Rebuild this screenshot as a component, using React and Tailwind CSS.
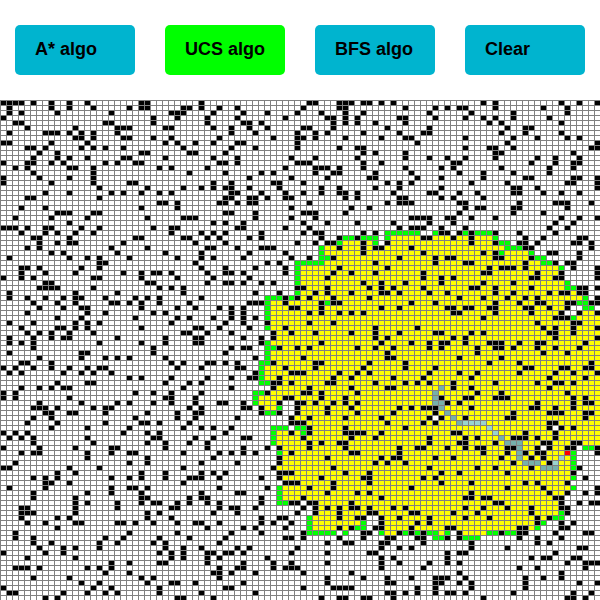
import { useState } from "react";

const COLS = 100;
const ROWS = 100;
const CELL_W = 6;
const CELL_H = 5;

// One line per grid row: wall columns of the left half | wall columns of the right half (counted from column 50).
const WALLS = `0 1 2 3 5 8 11 14 23 24 33|1 2 6 7 8 10 11 13 15 30 32 43 46 49
1 8 11 15 21 23 24 30 31 33 36 39|0 6 7 17 22 24 26 27 32 40 44
1 3 9 18 28 29 30 35 40 44 49|3 7 10 21 28 35 44
0 25 29 34 39 47|4 5 7 9 16 17 22 27 30 32 35 41
2 3 17 18 25 34 40 41 43|5 7 9 12 17 31 33 43
4 12 19 20 21 27 28 35 38 41 44|0 1 5 14 21 34 37 38
1 7 8 9 11 13 15 19 38 42 49|2 4 10 16 20 21 33 37 43
12 13 15 20 21 25 28 36 45 49|0 2 7 13 17 18 27 35 39 44 46
0 1 8 14 27 29 32 35 39 40 49|19 34 49
4 5 7 13 15 17 20 30 38 42 49|6 9 10 27 31 32 35 48 49
6 9 23 24 31 32 37|10 12 17 32 33 45
5 9 11 14 20 21 27 35 39 48|2 9 17 21 24 27 32 39 42 46
0 4 5 8 10 17 19 22 23 36 37 39 49|0 1 10 13 25 26 38 42 45 46
2 4 11 12 15 26 28 34 47|2 3 4 6 10 17 23 25 33 41 45
5 15 31 37 43 45|2 5 6 12 18 26 30 35 41
0 6 11 15 41 48|4 11 12 19 23 30 37 38 45 46 49
0 8 15 21 22 35 38 45 46|0 14 16 18 28 34 44 45 49
16 24 30 33 35 37 38 41 46|3 6 12 16 23 35 36 39 49
7 11 18 20 23 26 28 38 39 43 47|0 3 6 7 9 15 21 22 26 29 35 36 40 43 46
4 5 16 37 38 41 42 44 47 48|7 9 16 17 23 25 30
26 27 29 36 37 39 41 42|1 14 16 17 18 26 27 36 42 43 44 48
3 7 23 29 48|8 11 27 29 30 35 36 44
9 10 11 15 16 37 38 42|0 1 2 7 26 35 40
2 8 14 24 30 31 32 42 48|2 18 19 20 21 24 25 28 32 43 46 49
11 35 37 40|0 4 9 15 21 25 42 45
0 1 2 4 7 8 13 16 25 28 29 39 40 47|1 16 18 19 20 23 27 41 44
3 7 9 12 15 28 33 35 37 43|0 2 3 10 12 23 24 26 28 32 36 42
5 6 11 22 23 30 31 34 36 41 43|3 6 9 20 21 25 28 37 40 46 47
6 9 11 12 20 32 37 49|2 4 5 10 14 28 32 36 37 39 45 46 48
4 6 18 24 34 35 39 43 44 45|6 10 12 13 18 37 38 48
8 10 19 27 33 41 47|10 20 30 32 41 42 46
1 11 14 16 21 29 33 35 40 48|1 5 16 22 24 25 32 33 38 46
16 17 32 44 46|12 22 27 28 37 42 44 45
3 4 6 13 16 33 37 42 47|6 14 31 33 34 35 37 45 49
3 7 12 20 23 25 26 28 34 37 38 40 47|5 8 12 20 30 31 39 43 49
0 3 5 15 16 23 29 35 41|4 20 23 25 38 39 42 43 49
7 8 24 25 34 37 38 40 43 45|10 13 17 23 30 35
6 7 8 9 15 26 28 30 49|0 4 11 13 15 20 28 29 32 38 46 47 49
1 12 19 30 42 46|2 4 8 13 14 16 21 24 32 35 41 43 44 46 47
1 4 7 10 12 13 17 22 24 26 33 47 49|1 5 11 26 30 34 37 39 49
5 9 12 18 19 21 23 26 31 41 42 43 47|3 5 6 18 22 32 36 39 40 44 45 48 49
6 10 13 14 23 29 32 36 38 40 48 49|3 13 16 24 25 27 28 31 32 37 38 41 44
4 14 17 25 27 38 40|1 3 6 8 10 25 26 32 38 43 46 49
9 13 22 29 31 35 38 40 42|30 42 43 44
1 5 12 14 16 28 37 40 44|1 5 39 45 46
3 9 10 12 14 23 32 33 36 41 47|12 19 40 42 45 49
4 6 8 11 15 30 31 34 38 45 48|2 8 12 16 22 23 28 30 41 42 45
1 5 8 10 11 19 27 32 33 40 43 45|12 14 25 27 42 49
1 3 5 16 23 27 32 33 43|3 13 18 21 23 24 27 31 32 33 36 39 40 47
5 25 38 40 41 46 49|1 9 12 15 21 23 29 32 33 35 39 42 46
1 13 14 25 37|14 29 40 44
6 13 17 19 21 27 42|0 14 15 26 33
3 4 8 28 30 34 35 37 39 45|2 3 11 17 31 36 48
0 2 5 8 11 14 16 17 29 33 39 40 47|2 10 17 22 37 38 43 44 47 48
1 3 10 13 15 18 42 48 49|0 6 9 11 21 26 29 36 42 45 49
21 23 28 34 38 41 42 46|5 8 15 20 28 41 47
9 14 15 27 31 33 45 46 48|4 5 12 17 19 21 25 32 39 42 43 45
3 6 8 10 11 30 38 45|1 8 14 15 25 28 41
0 2 22 25 28 33 44|0 1 3 9 29 33 44
0 2 11 27 28 32 47 48|3 7 23 27 28 32 33 34 45 47
6 13 19 21 25 28 32 36 37 40 46 49|0 2 5 7 9 24 26 39 45 47 48
5 6 7 9 15 17 18 31 33 40 41 43 49|4 8 16 18 20 21 22 28 38 39 42 45
7 8 11 12 17 24 29 32 33 43 46 49|4 9 15 22 35 41 42 43 47 48
5 8 22 29 32 39 48|1 7 13 21 23 27 34 35 47
4 9 17 23 24 26 31 48 49|0 14 20 22 41 42
8 14 21 30 33 35 38|1 7 17 41 43 45
0 2 4 20 24 26 37 48|1 7 8 9 10 13 25 26 37 42
1 3 5 14 25 26 32 35 40 41|0 8 12 21 27 29 35 36 37 39 42
5 15 24 27 31 34|1 3 6 7 21 26 27 32 40 41 45 46
0 6 12 18 19 27 34 40 44 46|1 7 16 19 20 24 27 29 30 34 35 39 41 44 45 49
3 5 6 14 18 21 22 30 36 38 40 42 48|8 9 16 30 34 37 39 40 49
14 24 35 46|4 13 15 16 22 25 33 38 40
2 21 24 33 39 46|12 14 17 35 41
0 1 11 16 30 45|5 21 29 32 38 46
9 12 23 27 33 35 37 46 47 48|7 11 23 26 34 45
5 7 9 18 21 23 27 31 32 33 36 43 46|3 10 11 20 22 47
7 8 11 30 47 48 49|5 11 23 28 37 39 44
1 7 18 21 22 24 36 44|1 5 18 34 40 49
5 14 18 23 33 39 40|4 9 11 28 41 44 47 49
5 12 23 24 31 33 34 43|0 13 27 28 30 31 42 43
12 14 19 23 25 26 29 31 34 36 43 48 49|1 2 8 32 33 43 46 48 49
3 4 12 19 28 29 36 38 39 42|0 2 4 6 8 9 11 15 17 27 30 34 38 43 44
3 4 5 12 24 26 35 39 49|2 6 11 12 18 19 25 29 38 44
3 9 11 24 28 43 46 47|6 9 10 13 16 21 27 31 39 41
4 7 12 13 19 20 22 25 29 32 33 36 43 45 48|13 19 21 39 43 45
9 34 40 42 47|6 8 12 13 18 24 25 36 37 43 44
2 21 29 38 43|0 10 11 16 18 20 26 33 36 37 42 47 48
2 5 17 20 26 31 37 47 48|0 6 10 14 15 19 20 24 26 36 39 43
5 8 16 19 25 27 36|4 7 8 13 14 20 28 39 41
6 10 12 16 27 30 33 39 41 49|13 16 18 28 34 46 47
0 7 10 26 28 30 34 35 37 38 40 48|4 11 12 24 26 27 42
4 12 28 30 34 36 44|13 15 24 38 40 41 45 46
18 21 26 27 34 40 45 48|4 13 16 21 24 26 44 47 48 49
2 3 4 6 14 16 18 36 39 40 45 47 48 49|13 20 36 39 47
17 21 35 36 38 42|0 8 26 43
5 11 23 25 36|4 10 14 18 22 23 24 27 37 40 43
13 16 24 28 29 32 40|4 14 15 22 23 26 28 37 46 49
0 15 18 26 37 38|0 5 6 7 8 19 22 28 37
1 2 10 14 17 19 26 33 42|14 15 17 19 22 24 25 27 35 45 48
7 9 29 30 35|3 6 7 10 11 15 30 44 45 47`;

// "row: column or first-last column ..."
const VISITED = `27:65-81
28:57-61 65-81
29:54-83
30:54-87
31:55-88
32:54-89
33:50-92
34:50-92
35:50-92
36:50-93
37:50-93
38:50-96
39:50-96
40:45-93
41:45-93
42:45-93 96-98
43:45-94 96-99
44:45-99
45:45-99
46:45-99
47:45-99
48:45-99
49:46-99
50:45-99
51:45-99
52:45-99
53:44-99
54:44-99
55:44-99
56:45-99
57:45-99
58:44-99
59:43-99
60:43-45 50-99
61:44-45 50-99
62:50-99
63:49-71 73-99
64:50-99
65:51-91 93-99
66:46-99
67:46-99
68:46-99
69:47-89 91-95
70:47-94
71:47-94
72:47-94
73:46-94
74:49-94
75:47-94
76:50-93
77:47-94
78:47-93
79:47-91
80:53-92
81:53-92
82:53-92
83:52-60 63-91
84:52-59 63-89
85:52-58 63-88
86:64-65 73 77-80`;

const FRONTIER = `26:64-69 72 77 79-81
27:57-58 60-62 64 82
28:56 62 83-84
29:53 84-86
30:53 83 88
31:53-54 89-90
32:49-53 90-91
33:49 93
34:49
35:49
36:49 94
37:94-95
38:49
39:44-46 48 97
40:44 54 96-97
41:44 97-98
42:44
43:44 95
45:44
48:44
49:44-45
50:44
51:44
52:43-44
53:43
54:43
55:43
56:43-44
58:42-43
59:42
60:42
61:46
62:44-45
65:45-47 49-50
66:45 50
67:45
68:45
69:97-98
70:46 95
71:95
72:95
73:95
75:95
77:46 95
78:46
79:46
80:46-47
82:93
83:51 92-93
84:51 60 90
85:51 59-60 89
86:51-55 57 63 67 69 71-72 74 81-82 84-85
87:72-73 77-79`;

const ROUTE = `57:73
58:72
59:72
60:72-73
61:73
62:74
63:75
64:76
67:83
68:84-86
69:86
70:86
71:86
72:87-89
73:90-92`;

const ROUTE_LIGHT = `64:77-80
65:81
66:82
71:93
72:92`;

const GOAL = `70:94`;

function cellPath(row, col) {
  return `M${col * CELL_W + 1} ${row * CELL_H + 1}h5v4h-5z`;
}

function spansToPath(text) {
  return text
    .split("\n")
    .map((line) => {
      const [row, spans] = line.split(":");
      return spans
        .split(" ")
        .map((span) => {
          const [from, to = from] = span.split("-").map(Number);
          let d = "";
          for (let col = from; col <= to; col++) d += cellPath(Number(row), col);
          return d;
        })
        .join("");
    })
    .join("");
}

function wallsToPath(text) {
  return text
    .split("\n")
    .map((line, row) =>
      line
        .split("|")
        .map((half, side) =>
          half
            .split(" ")
            .map((col) => cellPath(row, Number(col) + side * 50))
            .join("")
        )
        .join("")
    )
    .join("");
}

const LAYERS = [
  { name: "visited", d: spansToPath(VISITED), color: "fill-[#ffff00]" },
  { name: "frontier", d: spansToPath(FRONTIER), color: "fill-[#00ff00]" },
  { name: "route", d: spansToPath(ROUTE), color: "fill-[#76b0ab]" },
  { name: "route-light", d: spansToPath(ROUTE_LIGHT), color: "fill-[#9ad4cf]" },
  { name: "goal", d: spansToPath(GOAL), color: "fill-[#ff0000]" },
  { name: "walls", d: wallsToPath(WALLS), color: "fill-black" },
];

function GridMap() {
  return (
    <svg
      viewBox={`0 0 ${COLS * CELL_W} ${ROWS * CELL_H}`}
      className="block w-full"
      shapeRendering="crispEdges"
      role="img"
    >
      <defs>
        <pattern id="cells" width={CELL_W} height={CELL_H} patternUnits="userSpaceOnUse">
          <rect width={CELL_W} height={CELL_H} className="fill-[#808080]" />
          <rect x="1" y="1" width={CELL_W - 1} height={CELL_H - 1} className="fill-white" />
        </pattern>
      </defs>
      <rect width="100%" height="100%" fill="url(#cells)" />
      {LAYERS.map((layer) => (
        <path key={layer.name} d={layer.d} className={layer.color} />
      ))}
    </svg>
  );
}

const ACTIONS = ["A* algo", "UCS algo", "BFS algo", "Clear"];

export default function App() {
  const [active, setActive] = useState("UCS algo");
  return (
    <main className="bg-white font-['Liberation_Sans',Arial,sans-serif] text-black">
      <nav className="grid grid-cols-4 gap-[30px] px-[15px] py-[25px]">
        {ACTIONS.map((label) => (
          <button
            key={label}
            type="button"
            onClick={() => setActive(label)}
            className={`flex h-[50px] items-center rounded-[5px] pb-0.5 pl-5 text-left text-lg leading-6 font-bold whitespace-nowrap ${
              label === active ? "bg-[#00ff00]" : "bg-[#00b4cf]"
            }`}
          >
            {label}
          </button>
        ))}
      </nav>
      <GridMap />
    </main>
  );
}
